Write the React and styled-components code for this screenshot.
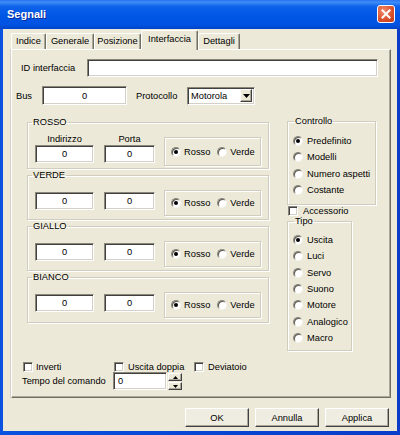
import React from "react";
import styled, { createGlobalStyle } from "styled-components";

const GlobalStyle = createGlobalStyle`
  html, body {
    margin: 0;
    padding: 0;
    background: #ece9d8;
  }
  body {
    font-family: "Liberation Sans", Arial, sans-serif;
    font-size: 9.3px;
    color: #000;
  }
  * {
    box-sizing: border-box;
  }
`;

const Window = styled.div`
  width: 400px;
  height: 435px;
  display: flex;
  flex-direction: column;
  background: linear-gradient(90deg, #0a52e0, #0846d4 50%, #0a3cc8);
  overflow: hidden;
`;

const TitleBar = styled.div`
  height: 29px;
  flex-shrink: 0;
  display: flex;
  align-items: center;
  justify-content: space-between;
  padding: 0 5px 1px 7px;
  background: linear-gradient(
    180deg,
    #2a74f0 0%,
    #3d8cf8 8%,
    #0e62ea 22%,
    #0056e6 55%,
    #0053e2 85%,
    #0043c8 100%
  );
`;

const Title = styled.span`
  color: #fff;
  font-weight: bold;
  font-size: 11px;
  text-shadow: 1px 1px 0 #0a2a9a;
`;

const CloseButton = styled.div`
  width: 18px;
  height: 18px;
  border: 1px solid #fff;
  border-radius: 3px;
  background: radial-gradient(circle at 35% 30%, #f08a6c, #d9502b 60%, #bf3a16);
  display: flex;
  align-items: center;
  justify-content: center;
`;

const Client = styled.div`
  flex: 1;
  margin: 0 3px 4px;
  background: #ece9d8;
  display: flex;
  flex-direction: column;
  padding: 1px 6px 0 8px;
`;

const TabStrip = styled.div`
  height: 19px;
  display: flex;
  align-items: flex-end;
  position: relative;
  z-index: 1;
`;

const Tab = styled.div`
  width: ${(p) => p.$width}px;
  height: ${(p) => (p.$active ? 20 : 16)}px;
  margin-bottom: ${(p) => (p.$active ? -1 : 0)}px;
  padding-top: ${(p) => (p.$active ? 3 : 2)}px;
  text-align: center;
  background: #ece9d8;
  border-top: 1px solid #fff;
  border-left: 1px solid #fff;
  border-right: 1px solid #716f64;
  border-radius: 2px 2px 0 0;
  box-shadow: inset -1px 0 0 #aca899;
  white-space: nowrap;
`;

const Panel = styled.div`
  height: 349px;
  display: flex;
  flex-direction: column;
  border-top: 1px solid #fff;
  border-left: 1px solid #fff;
  border-right: 1px solid #716f64;
  border-bottom: 1px solid #716f64;
  box-shadow: inset -1px -1px 0 #aca899, -1px 0 0 #d4d0c8;
`;

const FormRow = styled.div`
  display: flex;
  align-items: center;
  margin-top: 9px;
  padding-left: ${(p) => p.$indent}px;
`;

const Caption = styled.span`
  width: ${(p) => p.$width}px;
  margin-left: ${(p) => p.$gap || 0}px;
  flex-shrink: 0;
  white-space: nowrap;
`;

const TextBox = styled.input`
  width: ${(p) => p.$width}px;
  height: ${(p) => p.$height || 18}px;
  margin: ${(p) => p.$top || 0}px 0 0;
  padding: 0 ${(p) => (p.$left ? 4 : 0)}px;
  font: inherit;
  color: #000;
  text-align: ${(p) => (p.$left ? "left" : "center")};
  background: #fff;
  border: 1px solid;
  border-color: #8a877a #fff #fff #8a877a;
  box-shadow: inset 1px 1px 0 #404040, inset -1px -1px 0 #d4d0c8;
  outline: none;
`;

const Combo = styled.div`
  width: 68px;
  height: 18px;
  display: flex;
  align-items: center;
  justify-content: space-between;
  padding: 2px 2px 2px 3px;
  background: #fff;
  border: 1px solid;
  border-color: #8a877a #fff #fff #8a877a;
  box-shadow: inset 1px 1px 0 #404040, inset -1px -1px 0 #d4d0c8;
`;

const ArrowButton = styled.div`
  width: ${(p) => p.$width || 12}px;
  height: ${(p) => p.$height || 13}px;
  display: flex;
  align-items: center;
  justify-content: center;
  background: #ece9d8;
  border: 1px solid;
  border-color: #fff #404040 #404040 #fff;
  box-shadow: inset -1px -1px 0 #aca899;
`;

const Main = styled.div`
  display: flex;
  align-items: flex-start;
  margin-top: 11px;
  padding-left: 15px;
`;

const LeftColumn = styled.div`
  width: 242px;
  display: flex;
  flex-direction: column;
  gap: 1px;
  margin-top: 1px;
`;

const RightColumn = styled.div`
  width: 89px;
  margin-left: 18px;
  display: flex;
  flex-direction: column;
`;

const Group = styled.fieldset`
  margin: 0;
  min-width: 0;
  width: ${(p) => p.$width}px;
  height: ${(p) => p.$height}px;
  padding: ${(p) => p.$padTop}px 0 0;
  border: 1px solid #d0cdbe;
  box-shadow: inset 1px 1px 0 #fff, 1px 1px 0 #fff;
`;

const Legend = styled.legend`
  margin-left: ${(p) => p.$indent || 4}px;
  padding: 0 1px;
  line-height: 11px;
  font-size: 9.3px;
`;

const GroupRow = styled.div`
  display: flex;
  align-items: flex-start;
  padding-left: 7px;
`;

const Field = styled.div`
  display: flex;
  flex-direction: column;
  align-items: center;
  margin-right: ${(p) => p.$gap}px;
`;

const FieldCaption = styled.span`
  height: 11px;
  line-height: 11px;
`;

const RadioFrame = styled.div`
  width: 97px;
  height: ${(p) => p.$height}px;
  margin-top: ${(p) => p.$top}px;
  display: flex;
  align-items: center;
  padding-left: 6px;
  border: 1px solid #d0cdbe;
  box-shadow: inset 1px 1px 0 #fff, 1px 1px 0 #fff;
`;

const Option = styled.label`
  display: flex;
  align-items: center;
  gap: ${(p) => p.$gap || 3}px;
  height: ${(p) => p.$height || "auto"};
  margin-right: ${(p) => p.$space || 0}px;
  padding-left: ${(p) => p.$indent || 0}px;
  white-space: nowrap;
`;

const RadioDot = styled.span`
  width: 10px;
  height: 10px;
  flex-shrink: 0;
  border-radius: 50%;
  background: #fff;
  border: 1px solid;
  border-color: #8a877a #f4f3ee #f4f3ee #8a877a;
  box-shadow: inset 1px 1px 0 #5a5850;
  display: flex;
  align-items: center;
  justify-content: center;

  &::after {
    content: "";
    width: 4px;
    height: 4px;
    border-radius: 50%;
    background: ${(p) => (p.$checked ? "#000" : "transparent")};
  }
`;

const CheckBox = styled.span`
  width: 10px;
  height: 10px;
  flex-shrink: 0;
  background: #fff;
  border: 1px solid;
  border-color: #8a877a #fff #fff #8a877a;
  box-shadow: inset 1px 1px 0 #404040, inset -1px -1px 0 #d4d0c8;
`;

const BottomGrid = styled.div`
  display: grid;
  grid-template-columns: 91px 81px auto;
  grid-template-rows: 11px 18px;
  align-items: center;
  margin-top: 10px;
  padding-left: 10px;
`;

const Spin = styled.div`
  display: flex;
  align-items: flex-start;
  gap: 1px;
`;

const SpinButtons = styled.div`
  display: flex;
  flex-direction: column;
  gap: 1px;
  margin-top: 1px;
`;

const ButtonRow = styled.div`
  display: flex;
  justify-content: flex-end;
  gap: 6px;
  margin-top: 10px;
  padding-right: 2px;
`;

const Button = styled.button`
  width: 64px;
  height: 19px;
  padding: 0;
  font: inherit;
  color: #000;
  background: #efede2;
  border: 1px solid;
  border-color: #fff #404040 #404040 #fff;
  box-shadow: inset -1px -1px 0 #aca899;
`;

const DownArrow = ({ size = 7 }) => (
  <svg width={size} height={Math.ceil(size / 2)} viewBox="0 0 7 4">
    <polygon points="0,0 7,0 3.5,4" fill="#000" />
  </svg>
);

const UpArrow = () => (
  <svg width="5" height="3" viewBox="0 0 5 3">
    <polygon points="0,3 5,3 2.5,0" fill="#000" />
  </svg>
);

const tabs = [
  { label: "Indice", width: 35 },
  { label: "Generale", width: 48 },
  { label: "Posizione", width: 47 },
  { label: "Interfaccia", width: 57, active: true },
  { label: "Dettagli", width: 42 },
];

const signals = [
  { title: "ROSSO", labels: true, height: 52 },
  { title: "VERDE", height: 50 },
  { title: "GIALLO", height: 50 },
  { title: "BIANCO", height: 51 },
];

const controlli = ["Predefinito", "Modelli", "Numero aspetti", "Costante"];
const tipi = ["Uscita", "Luci", "Servo", "Suono", "Motore", "Analogico", "Macro"];

function SignalGroup({ title, labels, height }) {
  return (
    <Group $width={242} $height={height} $padTop={labels ? 6 : 9}>
      <Legend>{title}</Legend>
      <GroupRow>
        <Field $gap={10}>
          {labels && <FieldCaption>Indirizzo</FieldCaption>}
          <TextBox $width={59} $top={labels ? 0 : 2} defaultValue="0" readOnly />
        </Field>
        <Field $gap={9}>
          {labels && <FieldCaption>Porta</FieldCaption>}
          <TextBox $width={51} $top={labels ? 0 : 2} defaultValue="0" readOnly />
        </Field>
        <RadioFrame $top={labels ? 3 : 0} $height={labels ? 29 : 26}>
          <Option $space={7}>
            <RadioDot $checked />
            Rosso
          </Option>
          <Option>
            <RadioDot />
            Verde
          </Option>
        </RadioFrame>
      </GroupRow>
    </Group>
  );
}

function RadioList({ title, items, height, width, padTop }) {
  return (
    <Group $height={height} $width={width} $padTop={padTop}>
      <Legend $indent={6}>{title}</Legend>
      {items.map((item, index) => (
        <Option key={item} $height="16.3px" $indent={5} $gap={4}>
          <RadioDot $checked={index === 0} />
          {item}
        </Option>
      ))}
    </Group>
  );
}

export default function App() {
  return (
    <Window>
      <GlobalStyle />
      <TitleBar>
        <Title>Segnali</Title>
        <CloseButton>
          <svg width="10" height="10" viewBox="0 0 10 10">
            <path d="M1.5 1.5 L8.5 8.5 M8.5 1.5 L1.5 8.5" stroke="#fff" strokeWidth="2" strokeLinecap="square" />
          </svg>
        </CloseButton>
      </TitleBar>
      <Client>
        <TabStrip>
          {tabs.map((tab) => (
            <Tab key={tab.label} $width={tab.width} $active={tab.active}>
              {tab.label}
            </Tab>
          ))}
        </TabStrip>
        <Panel>
          <FormRow $indent={9}>
            <Caption $width={66}>ID interfaccia</Caption>
            <TextBox $width={291} readOnly />
          </FormRow>
          <FormRow $indent={4}>
            <Caption $width={26}>Bus</Caption>
            <TextBox $width={85} $height={19} defaultValue="0" readOnly />
            <Caption $width={51} $gap={9}>Protocollo</Caption>
            <Combo>
              Motorola
              <ArrowButton>
                <DownArrow />
              </ArrowButton>
            </Combo>
          </FormRow>
          <Main>
            <LeftColumn>
              {signals.map((s) => (
                <SignalGroup key={s.title} {...s} />
              ))}
            </LeftColumn>
            <RightColumn>
              <RadioList title="Controllo" items={controlli} height={89} width={89} padTop={6} />
              <Option $height="11px" $indent={1} $gap={5}>
                <CheckBox />
                Accessorio
              </Option>
              <RadioList title="Tipo" items={tipi} height={135} width={65} padTop={5} />
            </RightColumn>
          </Main>
          <BottomGrid>
            <Option $indent={1} $gap={3}>
              <CheckBox />
              Inverti
            </Option>
            <Option $indent={1} $gap={4}>
              <CheckBox />
              Uscita doppia
            </Option>
            <Option $gap={4}>
              <CheckBox />
              Deviatoio
            </Option>
            <Caption $width={91}>Tempo del comando</Caption>
            <Spin>
              <TextBox $width={54} $left defaultValue="0" readOnly />
              <SpinButtons>
                <ArrowButton $width={14} $height={8}>
                  <UpArrow />
                </ArrowButton>
                <ArrowButton $width={14} $height={8}>
                  <DownArrow size={5} />
                </ArrowButton>
              </SpinButtons>
            </Spin>
          </BottomGrid>
        </Panel>
        <ButtonRow>
          <Button>OK</Button>
          <Button>Annulla</Button>
          <Button>Applica</Button>
        </ButtonRow>
      </Client>
    </Window>
  );
}
